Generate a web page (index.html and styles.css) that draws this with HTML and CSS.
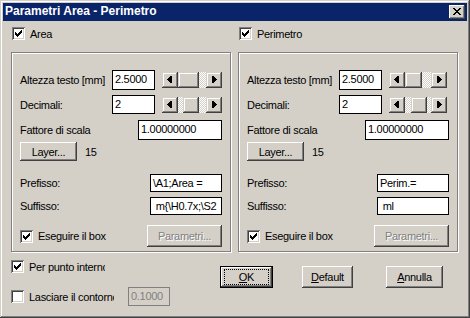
FILE: index.html
```html
<!DOCTYPE html>
<html lang="it">
<head>
  <meta charset="UTF-8" />
  <title>Parametri Area - Perimetro</title>
  <link rel="stylesheet" href="styles.css">
</head>
<body>
  <div class="window">
    <div class="titlebar">
      <span class="title">Parametri Area - Perimetro</span>
      <span class="close">
        <svg width="16" height="14" viewBox="0 0 16 14" shape-rendering="crispEdges">
          <path d="M4 3h2v1h-2z M10 3h2v1h-2z M5 4h2v1h-2z M9 4h2v1h-2z M6 5h4v1h-4z M7 6h2v1h-2z M6 7h4v1h-4z M5 8h2v1h-2z M9 8h2v1h-2z M4 9h2v1h-2z M10 9h2v1h-2z" fill="#000"/>
        </svg>
      </span>
    </div>

    <div class="content">
      <div class="columns">
        <!-- Area -->
        <div class="col">
          <div class="check head"><span class="box on"></span><span>Area</span></div>
          <div class="group">
            <div class="row r1">
              <span class="lbl">Altezza testo [mm]</span>
              <span class="field small">2.5000</span>
              <div class="scroll">
                <span class="sbtn left"></span>
                <span class="track"><span class="thumb" style="margin-left:0;width:21px"></span></span>
                <span class="sbtn right"></span>
              </div>
            </div>
            <div class="row r2">
              <span class="lbl">Decimali:</span>
              <span class="field small">2</span>
              <div class="scroll">
                <span class="sbtn left"></span>
                <span class="track"><span class="thumb" style="margin-left:5px;width:16px"></span></span>
                <span class="sbtn right"></span>
              </div>
            </div>
            <div class="row r3">
              <span class="lbl">Fattore di scala</span>
              <span class="field scale">1.00000000</span>
            </div>
            <div class="row r4">
              <span class="btn layer">Layer...</span>
              <span class="count">15</span>
            </div>
            <div class="row r5">
              <span class="lbl">Prefisso:</span>
              <span class="field affix">\A1;Area =</span>
            </div>
            <div class="row r6">
              <span class="lbl">Suffisso:</span>
              <span class="field affix"> m{\H0.7x;\S2</span>
            </div>
            <div class="row r7">
              <div class="check"><span class="box on"></span><span>Eseguire il box</span></div>
              <span class="btn disabled params">Parametri...</span>
            </div>
          </div>
        </div>

        <!-- Perimetro -->
        <div class="col">
          <div class="check head"><span class="box on"></span><span>Perimetro</span></div>
          <div class="group">
            <div class="row r1">
              <span class="lbl">Altezza testo [mm]</span>
              <span class="field small">2.5000</span>
              <div class="scroll narrow">
                <span class="sbtn left"></span>
                <span class="track"><span class="thumb" style="margin-left:0;width:17px"></span></span>
                <span class="sbtn right"></span>
              </div>
            </div>
            <div class="row r2">
              <span class="lbl">Decimali:</span>
              <span class="field small">2</span>
              <div class="scroll narrow">
                <span class="sbtn left"></span>
                <span class="track"><span class="thumb" style="margin-left:6px;width:16px"></span></span>
                <span class="sbtn right"></span>
              </div>
            </div>
            <div class="row r3">
              <span class="lbl">Fattore di scala</span>
              <span class="field scale">1.00000000</span>
            </div>
            <div class="row r4">
              <span class="btn layer">Layer...</span>
              <span class="count">15</span>
            </div>
            <div class="row r5">
              <span class="lbl">Prefisso:</span>
              <span class="field affix">Perim.=</span>
            </div>
            <div class="row r6">
              <span class="lbl">Suffisso:</span>
              <span class="field affix"> ml</span>
            </div>
            <div class="row r7">
              <div class="check"><span class="box on"></span><span>Eseguire il box</span></div>
              <span class="btn disabled params">Parametri...</span>
            </div>
          </div>
        </div>
      </div>

      <div class="bottom">
        <div class="options">
          <div class="check opt1"><span class="box on"></span><span class="clip clip-a">Per punto interno</span></div>
          <div class="check opt2">
            <span class="box"></span><span class="clip clip-b">Lasciare il contorno</span>
            <span class="field off">0.1000</span>
          </div>
        </div>
        <div class="actions">
          <span class="btn default"><span class="focus"><u>O</u>K</span></span>
          <span class="btn act-default"><u>D</u>efault</span>
          <span class="btn act-cancel"><u>A</u>nnulla</span>
        </div>
      </div>
    </div>
  </div>
</body>
</html>
```

FILE: styles.css
```css
* {
  margin: 0;
  padding: 0;
  box-sizing: border-box;
}
body {
  font-family: 'Liberation Sans', Arial, sans-serif;
  font-size: 11px;
  letter-spacing: -0.3px;
  color: #000;
  background: #d4d0c8;
}
.window {
  width: 470px;
  height: 318px;
  padding: 3px;
  background: #d4d0c8;
  box-shadow: inset -1px -1px #404040, inset 1px 1px #d4d0c8,
              inset -2px -2px #808080, inset 2px 2px #fff;
}
.titlebar {
  height: 18px;
  background: #0a246a;
  display: flex;
  align-items: flex-start;
  justify-content: space-between;
}
.title {
  color: #fff;
  font-weight: bold;
  font-size: 12px;
  letter-spacing: 0;
  line-height: 17px;
  padding-left: 2px;
}
.close {
  width: 16px;
  height: 14px;
  margin: 2px 2px 0 0;
  background: #d4d0c8;
  box-shadow: inset -1px -1px #404040, inset 1px 1px #fff,
              inset -2px -2px #808080;
}
.close svg {
  display: block;
}
.content {
  padding: 6px 0 0 8px;
}
.columns {
  display: flex;
  gap: 7px;
}
.col {
  width: 220px;
}

/* checkboxes */
.check {
  display: flex;
  align-items: center;
  height: 13px;
}
.check.head {
  margin-left: 1px;
}
.box {
  width: 13px;
  height: 13px;
  flex: none;
  margin-right: 5px;
  background: #fff;
  box-shadow: inset 1px 1px #808080, inset -1px -1px #fff,
              inset 2px 2px #404040, inset -2px -2px #d4d0c8;
}
.box.on {
  background: #fff url("data:image/svg+xml,%3Csvg xmlns='http://www.w3.org/2000/svg' width='13' height='13' shape-rendering='crispEdges'%3E%3Cpath d='M3 5h1v3h-1z M4 6h1v3h-1z M5 7h1v3h-1z M6 6h1v3h-1z M7 5h1v3h-1z M8 4h1v3h-1z M9 3h1v3h-1z' fill='%23000'/%3E%3C/svg%3E") no-repeat;
}

/* group boxes */
.group {
  margin-top: 12px;
  height: 200px;
  padding: 17px 8px 0 8px;
  border: 1px solid #808080;
  box-shadow: inset 1px 1px #fff, 1px 1px #fff;
}
.row {
  display: flex;
  align-items: center;
}
.r1 { height: 20px; }
.r2 { height: 19px; margin-top: 5px; }
.r3 { height: 20px; margin-top: 6px; }
.r4 { height: 19px; margin-top: 2px; }
.r5 { height: 18px; margin-top: 13px; }
.r6 { height: 18px; margin-top: 5px; }
.r7 { height: 22px; margin-top: 10px; }
.r1 .lbl, .r2 .lbl {
  width: 92px;
}
.field {
  display: block;
  height: 100%;
  background: #fff;
  border: 1px solid #000;
  padding: 0 2px;
  line-height: 17px;
  white-space: pre;
  overflow: hidden;
}
.field.small {
  width: 43px;
}
.field.scale {
  width: 84px;
  margin-left: auto;
}
.field.affix {
  width: 72px;
  margin-left: auto;
}
.field.off {
  width: 42px;
  height: 19px;
  margin-left: 14px;
  background: #d4d0c8;
  border-color: #808080;
  color: #808080;
}

/* scrollbars */
.scroll {
  display: flex;
  width: 60px;
  height: 16px;
  margin-left: 7px;
}
.scroll.narrow {
  width: 58px;
}
.sbtn {
  width: 16px;
  height: 16px;
  flex: none;
  background-color: #d4d0c8;
  background-repeat: no-repeat;
  box-shadow: inset -1px -1px #404040, inset 1px 1px #d4d0c8,
              inset -2px -2px #808080, inset 2px 2px #fff;
}
.sbtn.left {
  background-image: url("data:image/svg+xml,%3Csvg xmlns='http://www.w3.org/2000/svg' width='16' height='16' shape-rendering='crispEdges'%3E%3Cpath d='M5 7h1v1h-1z M6 6h1v3h-1z M7 5h1v5h-1z M8 4h2v7h-2z' fill='%23000'/%3E%3C/svg%3E");
}
.sbtn.right {
  background-image: url("data:image/svg+xml,%3Csvg xmlns='http://www.w3.org/2000/svg' width='16' height='16' shape-rendering='crispEdges'%3E%3Cpath d='M6 4h2v7h-2z M8 5h1v5h-1z M9 6h1v3h-1z M10 7h1v1h-1z' fill='%23000'/%3E%3C/svg%3E");
}
.track {
  flex: 1;
  display: flex;
  background: repeating-conic-gradient(#fff 0 25%, #d4d0c8 0 50%) 0 0 / 2px 2px;
}
.thumb {
  display: block;
  height: 16px;
  background: #d4d0c8;
  box-shadow: inset -1px -1px #404040, inset 1px 1px #d4d0c8,
              inset -2px -2px #808080, inset 2px 2px #fff;
}

/* buttons */
.btn {
  display: flex;
  align-items: center;
  justify-content: center;
  background: #d4d0c8;
  box-shadow: inset -1px -1px #404040, inset 1px 1px #fff,
              inset -2px -2px #808080, inset 2px 2px #d4d0c8;
}
.btn.layer {
  width: 57px;
  height: 19px;
}
.count {
  margin-left: 8px;
}
.btn.params {
  width: 75px;
  height: 22px;
  margin-left: auto;
}
.btn.disabled {
  color: #808080;
  text-shadow: 1px 1px #fff;
}
.btn u {
  text-decoration: underline;
}

/* bottom area */
.bottom {
  display: flex;
  margin-top: 8px;
}
.options {
  width: 209px;
}
.check.opt2 {
  height: 19px;
  margin-top: 14px;
}
.clip {
  white-space: nowrap;
  overflow: hidden;
}
.clip-a { width: 76px; }
.clip-b { width: 85px; }
.actions {
  display: flex;
  margin-top: 6px;
}
.actions .btn {
  height: 22px;
}
.btn.default {
  width: 53px;
  border: 1px solid #000;
}
.focus {
  display: block;
  width: 45px;
  height: 16px;
  line-height: 14px;
  text-align: center;
  border: 1px dotted #000;
}
.btn.act-default {
  width: 51px;
  margin-left: 29px;
}
.btn.act-cancel {
  width: 57px;
  margin-left: 33px;
}
```
